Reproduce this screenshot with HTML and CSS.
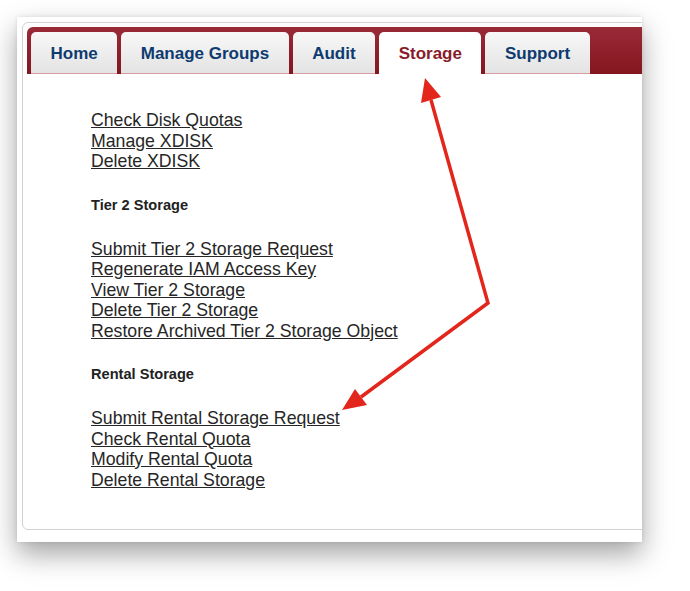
FILE: index.html
```html
<!DOCTYPE html>
<html>
<head>
<meta charset="utf-8">
<link rel="stylesheet" href="styles.css">
</head>
<body>
<div class="shot">
  <div class="panel">
    <div class="tabbar">
      <div class="tab">Home</div>
      <div class="tab">Manage Groups</div>
      <div class="tab">Audit</div>
      <div class="tab active">Storage</div>
      <div class="tab">Support</div>
    </div>
    <div class="content">
      <ul class="links">
        <li><a href="#">Check Disk Quotas</a></li>
        <li><a href="#">Manage XDISK</a></li>
        <li><a href="#">Delete XDISK</a></li>
      </ul>
      <h4 class="heading">Tier 2 Storage</h4>
      <ul class="links">
        <li><a href="#">Submit Tier 2 Storage Request</a></li>
        <li><a href="#">Regenerate IAM Access Key</a></li>
        <li><a href="#">View Tier 2 Storage</a></li>
        <li><a href="#">Delete Tier 2 Storage</a></li>
        <li><a href="#">Restore Archived Tier 2 Storage Object</a></li>
      </ul>
      <h4 class="heading">Rental Storage</h4>
      <ul class="links">
        <li><a href="#">Submit Rental Storage Request</a></li>
        <li><a href="#">Check Rental Quota</a></li>
        <li><a href="#">Modify Rental Quota</a></li>
        <li><a href="#">Delete Rental Storage</a></li>
      </ul>
    </div>
  </div>
</div>
<svg class="arrows" width="690" height="591" viewBox="0 0 690 591">
  <polyline points="431,100 488,303 361,397" fill="none" stroke="#e3261c" stroke-width="3.5" stroke-linejoin="miter"/>
  <polygon points="425,78 441,97 421,103" fill="#e3261c"/>
  <polygon points="342,410 355,389 367,405" fill="#e3261c"/>
</svg>
</body>
</html>
```

FILE: styles.css
```css
html, body {
  margin: 0;
  padding: 0;
  background: #ffffff;
}

body {
  width: 690px;
  height: 591px;
  overflow: hidden;
  position: relative;
  font-family: "Liberation Sans", Arial, sans-serif;
}

.shot {
  margin: 17px 0 0 17px;
  width: 625px;
  height: 525px;
  box-sizing: border-box;
  padding: 5px 0 0 5px;
  background: #ffffff;
  overflow: hidden;
  box-shadow: 0 12px 26px rgba(0, 0, 0, 0.36), 0 0 4px rgba(0, 0, 0, 0.1);
}

.panel {
  width: 720px;
  height: 508px;
  box-sizing: border-box;
  border: 1px solid #d2d2d2;
  border-radius: 6px;
  padding: 4px;
}

.tabbar {
  display: flex;
  gap: 4px;
  height: 47px;
  box-sizing: border-box;
  padding: 5px 0 0 4px;
  border-radius: 6px 0 0 0;
  background: linear-gradient(to bottom, #9a2a37, #84161f);
}

.tab {
  display: flex;
  align-items: center;
  padding: 2px 19.5px 0;
  height: 42px;
  box-sizing: border-box;
  border-radius: 5px 5px 0 0;
  background: linear-gradient(to bottom, #f8f8f8, #e3e3e3);
  border-bottom: 1px solid #d69ea3;
  font-size: 17px;
  font-weight: bold;
  color: #0d3b70;
}

.tab.active {
  background: #ffffff;
  border-bottom: none;
  color: #8a1b2a;
}

.content {
  padding: 36px 0 0 64px;
}

.links {
  list-style: none;
  margin: 0;
  padding: 0;
  font-size: 17.7px;
  line-height: 20.5px;
}

.links a {
  color: #262626;
  text-decoration: underline;
}

.heading {
  margin: 25px 0;
  font-size: 14.6px;
  line-height: 17px;
  font-weight: bold;
  color: #222222;
}

.arrows {
  position: absolute;
  left: 0;
  top: 0;
  pointer-events: none;
}
```
